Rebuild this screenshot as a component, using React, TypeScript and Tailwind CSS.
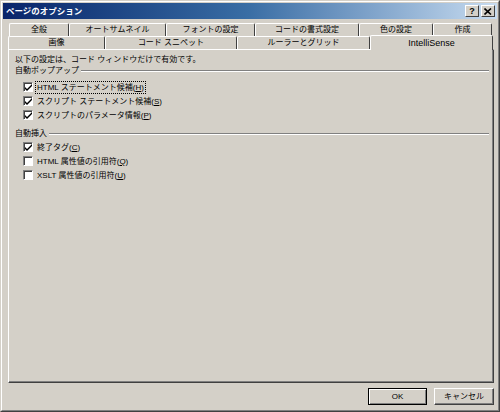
import React from 'react';

const font = { fontFamily: '"Liberation Sans", "Noto Sans CJK JP", sans-serif' };

function Check({ checked }: { checked: boolean }) {
  return (
    <span className="w-[10px] h-[10px] shrink-0 bg-white border border-t-[#808080] border-l-[#808080] border-b-[#ffffff] border-r-[#ffffff] shadow-[inset_1px_1px_0_#404040] flex items-center justify-center">
      {checked && (
        <svg width="7" height="7" viewBox="0 0 7 7">
          <path d="M0 3 L2 5 L7 0 L7 2 L2 7 L0 5 Z" fill="#000" />
        </svg>
      )}
    </span>
  );
}

function Option({ checked, label, keyChar, focus }: { checked: boolean; label: string; keyChar: string; focus?: boolean }) {
  return (
    <div className="flex items-center gap-[2px] h-[14px] pl-[8px]">
      <Check checked={checked} />
      <span className={`px-[1px] leading-[11px] ${focus ? 'border border-dotted border-black' : 'border border-transparent'}`}>
        {label}(<u>{keyChar}</u>)
      </span>
    </div>
  );
}

function GroupTitle({ text }: { text: string }) {
  return (
    <div className="flex items-center gap-[2px] h-[12px] leading-none">
      <span>{text}</span>
      <span className="flex-1 border-t border-t-[#808080] border-b border-b-white" />
    </div>
  );
}

const backTab = 'h-[13px] flex items-center justify-center leading-none border-t border-l border-r border-t-white border-l-white border-r-[#404040] rounded-t-[2px] bg-[#d4d0c8]';

export default function App() {
  const row1 = [
    ['全般', 60],
    ['オートサムネイル', 97],
    ['フォントの設定', 89],
    ['コードの書式設定', 104],
    ['色の設定', 74],
    ['作成', 59],
  ] as const;
  const row2 = [
    ['画像', 97],
    ['コード スニペット', 132],
    ['ルーラーとグリッド', 133],
  ] as const;

  return (
    <div style={font} className="w-[500px] h-[412px] bg-[#d4d0c8] text-[8px] text-black border border-t-[#d4d0c8] border-l-[#d4d0c8] border-r-[#404040] border-b-[#404040] flex flex-col overflow-hidden">
      <div className="flex-1 flex flex-col border border-t-white border-l-white border-r-[#808080] border-b-[#808080] p-[1px]">
        {/* title bar */}
        <div className="h-[16px] flex items-center bg-gradient-to-r from-[#0a246a] via-[#3a6ea5] to-[#c8dcf0] pl-[3px] pr-[2px]">
          <span className="flex-1 text-white font-bold leading-none text-[8.5px]">ページのオプション</span>
          <div className="flex">
            <span className="w-[14px] h-[12px] flex items-center justify-center bg-[#d4d0c8] border border-t-white border-l-white border-r-[#404040] border-b-[#404040] font-bold text-[9px] leading-none">?</span>
            <span className="w-[14px] h-[12px] ml-[2px] flex items-center justify-center bg-[#d4d0c8] border border-t-white border-l-white border-r-[#404040] border-b-[#404040]">
              <svg width="8" height="7" viewBox="0 0 8 7">
                <path d="M0.5 0.5 L7 6.5 M7 0.5 L0.5 6.5" stroke="#000" strokeWidth="1.6" />
              </svg>
            </span>
          </div>
        </div>

        {/* tabs */}
        <div className="mt-[4px] pl-[5px] flex flex-col">
          <div className="flex h-[13px] pl-[1px]">
            {row1.map(([t, w]) => (
              <div key={t} style={{ width: w }} className={backTab}>
                {t}
              </div>
            ))}
          </div>
          <div className="flex h-[13px] items-end">
            {row2.map(([t, w]) => (
              <div key={t} style={{ width: w }} className={backTab}>
                {t}
              </div>
            ))}
            <div className="w-[123px] h-[15px] -mb-[1px] z-10 flex items-center justify-center leading-none text-[9px] bg-[#d4d0c8] border-t border-l border-r border-t-white border-l-white border-r-[#404040] rounded-t-[2px] relative">
              IntelliSense
            </div>
          </div>

          {/* panel */}
          <div className="w-[486px] h-[334px] border border-t-white border-l-white border-r-[#404040] border-b-[#404040] shadow-[inset_-1px_-1px_0_#808080] pl-[6px] pr-[4px] pt-[4px]">
            <div className="h-[11px] leading-[11px]">以下の設定は、コード ウィンドウだけで有効です。</div>
            <GroupTitle text="自動ポップアップ" />
            <div className="pt-[3px]">
              <Option checked label="HTML ステートメント候補" keyChar="H" focus />
              <Option checked label="スクリプト ステートメント候補" keyChar="S" />
              <Option checked label="スクリプトのパラメータ情報" keyChar="P" />
            </div>
            <div className="mt-[6px]">
              <GroupTitle text="自動挿入" />
            </div>
            <div>
              <Option checked label="終了タグ" keyChar="C" />
              <Option checked={false} label="HTML 属性値の引用符" keyChar="Q" />
              <Option checked={false} label="XSLT 属性値の引用符" keyChar="U" />
            </div>
          </div>
        </div>

        {/* buttons */}
        <div className="mt-[5px] flex justify-end gap-[7px] pr-[3px]">
          <button className="w-[59px] h-[17px] bg-[#d4d0c8] border border-black shadow-[inset_1px_1px_0_#fff,inset_-1px_-1px_0_#808080] flex items-center justify-center leading-none">
            OK
          </button>
          <button className="w-[60px] h-[17px] bg-[#d4d0c8] border border-t-white border-l-white border-r-[#404040] border-b-[#404040] shadow-[inset_-1px_-1px_0_#808080] flex items-center justify-center leading-none">
            キャンセル
          </button>
        </div>
      </div>
    </div>
  );
}
